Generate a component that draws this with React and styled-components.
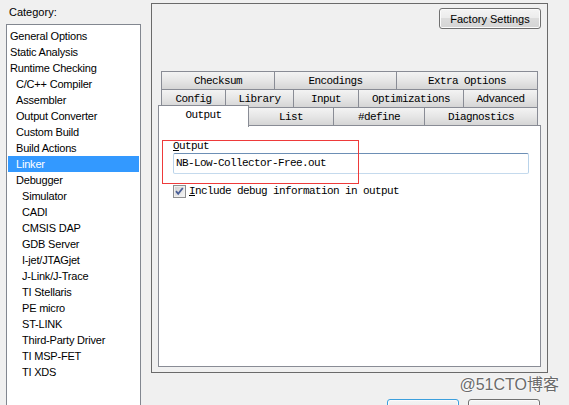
import styled, { createGlobalStyle } from 'styled-components';

const GlobalStyle = createGlobalStyle`
  html, body {
    margin: 0;
    padding: 0;
    background: #f0f0f0;
  }
  body {
    font-family: 'Liberation Sans', Arial, sans-serif;
    font-size: 11px;
    color: #000;
  }
`;

const categories = [
  { label: 'General Options', level: 0 },
  { label: 'Static Analysis', level: 0 },
  { label: 'Runtime Checking', level: 0 },
  { label: 'C/C++ Compiler', level: 1 },
  { label: 'Assembler', level: 1 },
  { label: 'Output Converter', level: 1 },
  { label: 'Custom Build', level: 1 },
  { label: 'Build Actions', level: 1 },
  { label: 'Linker', level: 1, selected: true },
  { label: 'Debugger', level: 1 },
  { label: 'Simulator', level: 2 },
  { label: 'CADI', level: 2 },
  { label: 'CMSIS DAP', level: 2 },
  { label: 'GDB Server', level: 2 },
  { label: 'I-jet/JTAGjet', level: 2 },
  { label: 'J-Link/J-Trace', level: 2 },
  { label: 'TI Stellaris', level: 2 },
  { label: 'PE micro', level: 2 },
  { label: 'ST-LINK', level: 2 },
  { label: 'Third-Party Driver', level: 2 },
  { label: 'TI MSP-FET', level: 2 },
  { label: 'TI XDS', level: 2 },
];

// widths include the 1px border shared with the tab on the left
const tabRows = [
  [
    { label: 'Checksum', w: 114 },
    { label: 'Encodings', w: 123 },
    { label: 'Extra Options', w: 142 },
  ],
  [
    { label: 'Config', w: 65 },
    { label: 'Library', w: 69 },
    { label: 'Input', w: 66 },
    { label: 'Optimizations', w: 106 },
    { label: 'Advanced', w: 75 },
  ],
];

const frontRow = [
  { label: 'List', w: 86 },
  { label: '#define', w: 92 },
  { label: 'Diagnostics', w: 114 },
];

const Window = styled.div`
  position: relative;
  width: 569px;
  height: 405px;
  overflow: hidden;
  display: flex;
  padding-left: 6px;
  gap: 10px;
  box-sizing: border-box;
`;

const LeftColumn = styled.div`
  width: 135px;
  display: flex;
  flex-direction: column;
`;

const CategoryLabel = styled.div`
  flex-shrink: 0;
  height: 24px;
  padding: 5px 0 0 3px;
  box-sizing: border-box;
  line-height: 14px;
  font-size: 11px;
`;

const CategoryList = styled.div`
  height: 420px;
  flex-shrink: 0;
  background: #fff;
  border: 1px solid #828790;
  padding: 3px 1px 0;
`;

const CategoryItem = styled.div`
  height: 16px;
  line-height: 16px;
  padding-left: ${({ $level }) => 2 + $level * 6}px;
  letter-spacing: -0.2px;
  white-space: nowrap;
  background: ${({ $selected }) => ($selected ? '#3399ff' : 'transparent')};
  color: ${({ $selected }) => ($selected ? '#fff' : '#000')};
`;

const RightColumn = styled.div`
  width: 397px;
  padding-top: 3px;
  display: flex;
  flex-direction: column;
`;

const Frame = styled.div`
  height: 370px;
  flex-shrink: 0;
  box-sizing: border-box;
  border: 1px solid #6a6a6a;
  padding: 4px 6px 0;
  display: flex;
  flex-direction: column;
`;

const TopBar = styled.div`
  display: flex;
  justify-content: flex-end;
`;

const PushButton = styled.button`
  width: ${({ $w }) => $w}px;
  height: 21px;
  padding: 0;
  box-sizing: border-box;
  font-family: 'Liberation Sans', Arial, sans-serif;
  font-size: 11px;
  color: #000;
  border: 1px solid ${({ $focused }) => ($focused ? '#3c9fdd' : '#707070')};
  border-radius: 3px;
  background: linear-gradient(#f4f4f4 0%, #ececec 45%, #dcdcdc 50%, #d4d4d4 100%);
  box-shadow: inset 0 0 0 1px #fbfbfb;
`;

const TabArea = styled.div`
  margin-top: 42px;
  display: flex;
  flex-direction: column;
`;

const TabRow = styled.div`
  display: flex;
  margin: 0 3px;
  height: 18px;
`;

const FrontRow = styled.div`
  display: flex;
  height: 18px;
  align-items: flex-end;
`;

const Tab = styled.div`
  width: ${({ $w }) => $w}px;
  height: 18px;
  flex-shrink: 0;
  box-sizing: border-box;
  border: 1px solid #898c95;
  border-bottom: none;
  margin-left: -1px;
  &:first-child {
    margin-left: 0;
  }
  background: linear-gradient(#f3f3f3, #e6e6e6 50%, #d5d5d5);
  font-family: 'Liberation Mono', 'DejaVu Sans Mono', monospace;
  font-size: 11px;
  letter-spacing: -0.6px;
  line-height: 19px;
  text-align: center;
  white-space: nowrap;
`;

const ActiveTab = styled.div`
  width: 91px;
  height: 22px;
  flex-shrink: 0;
  box-sizing: border-box;
  border: 1px solid #898c95;
  border-bottom: none;
  background: #fff;
  font-family: 'Liberation Mono', 'DejaVu Sans Mono', monospace;
  font-size: 11px;
  letter-spacing: -0.6px;
  line-height: 19px;
  text-align: center;
  position: relative;
  z-index: 1;
  margin-bottom: -2px;
`;

const Panel = styled.div`
  position: relative;
  height: 242px;
  box-sizing: border-box;
  background: #fff;
  border: 1px solid #898c95;
  padding: 13px 11px 0 14px;
  font-family: 'Liberation Mono', 'DejaVu Sans Mono', monospace;
  font-size: 11px;
  letter-spacing: -0.6px;
`;

const FieldLabel = styled.div`
  line-height: 14px;
`;

const TextField = styled.div`
  height: 21px;
  box-sizing: border-box;
  border: 1px solid;
  border-color: #6d8fb5 #b9d3ea #c5daed #b9d3ea;
  border-radius: 2px;
  padding-left: 2px;
  line-height: 19px;
  font-size: 11px;
`;

const CheckRow = styled.div`
  display: flex;
  align-items: center;
  gap: 3px;
  margin-top: 11px;
  line-height: 13px;
`;

const Annotation = styled.div`
  position: absolute;
  left: 3px;
  top: 14px;
  width: 197px;
  height: 44px;
  box-sizing: border-box;
  border: 1px solid #ee3a3a;
  pointer-events: none;
`;

const ButtonBar = styled.div`
  display: flex;
  justify-content: flex-end;
  gap: 9px;
  margin-top: 26px;
  padding-right: 8px;
`;

const Watermark = styled.div`
  position: absolute;
  right: 10px;
  top: 375px;
  line-height: 20px;
  font-family: 'Liberation Sans', 'Noto Sans CJK SC', sans-serif;
  font-size: 16px;
  color: #6a6a6a;
  text-shadow: 0 0 2px #fff, 0 0 2px #fff;
`;

function CheckBox() {
  return (
    <svg width="13" height="13" viewBox="0 0 13 13">
      <defs>
        <linearGradient id="cb" x1="0" y1="0" x2="1" y2="1">
          <stop offset="0" stopColor="#d2d2d2" />
          <stop offset="1" stopColor="#f4f4f4" />
        </linearGradient>
      </defs>
      <rect x="0.5" y="0.5" width="12" height="12" fill="#f0f0f0" stroke="#8e8f8f" />
      <rect x="2" y="2" width="9" height="9" fill="url(#cb)" />
      <path d="M3 6.2 L5.2 8.8 L9.8 3" fill="none" stroke="#4a5f97" strokeWidth="1.8" />
    </svg>
  );
}

export default function App() {
  return (
    <>
      <GlobalStyle />
      <Window>
        <LeftColumn>
          <CategoryLabel>Category:</CategoryLabel>
          <CategoryList>
            {categories.map((c) => (
              <CategoryItem key={c.label} $level={c.level} $selected={c.selected}>
                {c.label}
              </CategoryItem>
            ))}
          </CategoryList>
        </LeftColumn>

        <RightColumn>
          <Frame>
            <TopBar>
              <PushButton $w={102}>Factory Settings</PushButton>
            </TopBar>
            <TabArea>
              {tabRows.map((row, i) => (
                <TabRow key={i}>
                  {row.map((t) => (
                    <Tab key={t.label} $w={t.w}>
                      {t.label}
                    </Tab>
                  ))}
                </TabRow>
              ))}
              <FrontRow>
                <ActiveTab>Output</ActiveTab>
                {frontRow.map((t) => (
                  <Tab key={t.label} $w={t.w}>
                    {t.label}
                  </Tab>
                ))}
              </FrontRow>
              <Panel>
                <FieldLabel>
                  <u>O</u>utput
                </FieldLabel>
                <TextField>NB-Low-Collector-Free.out</TextField>
                <CheckRow>
                  <CheckBox />
                  <span>
                    <u>I</u>nclude debug information in output
                  </span>
                </CheckRow>
                <Annotation />
              </Panel>
            </TabArea>
          </Frame>
          <ButtonBar>
            <PushButton $w={72} $focused />
            <PushButton $w={72} />
          </ButtonBar>
        </RightColumn>
        <Watermark>@51CTO博客</Watermark>
      </Window>
    </>
  );
}
